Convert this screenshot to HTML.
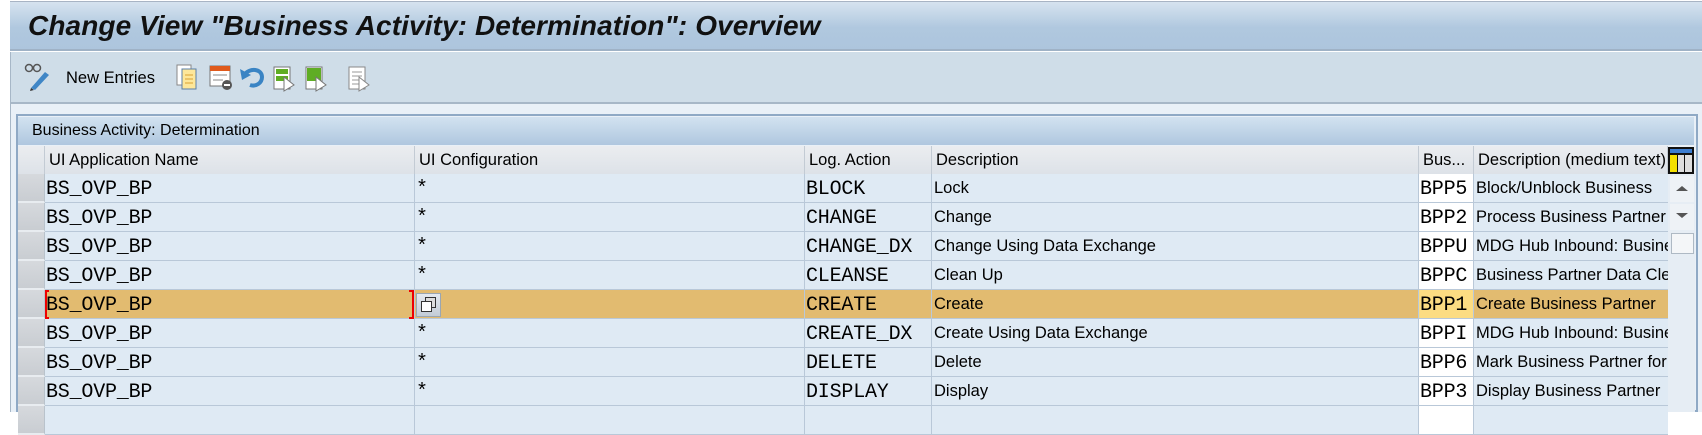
<!DOCTYPE html>
<html><head><meta charset="utf-8"><style>
*{margin:0;padding:0;box-sizing:border-box}
body{width:1702px;height:412px;overflow:hidden;background:#fff;position:relative;font-family:"Liberation Sans",sans-serif}
.abs{position:absolute}
#title{left:10px;top:1px;width:1692px;height:50px;background:linear-gradient(#d6e3ef,#b0c8df 55%,#adc5dd);border-top:1px solid #a8b4c4;border-bottom:2px solid #9fb2c6}
#title span{position:absolute;left:18px;top:8px;font-size:28px;font-weight:bold;font-style:italic;color:#111;letter-spacing:0.1px}
#tb{left:10px;top:52px;width:1692px;height:52px;background:#cfdde8;border-bottom:2px solid #a7b7c7;border-left:1px solid #a7b7c7}
#bg{left:10px;top:104px;width:1692px;height:308px;background:#e9f0f7;border-left:1px solid #a7b7c7}
#panel{left:16px;top:114px;width:1682px;height:298px;border:2px solid #8fa9c5;background:#e9f0f7}
#phead{left:18px;top:117px;width:1676px;height:28px;background:linear-gradient(#d2e2f0,#afc7df);font-size:16px;color:#000}
#phead span{position:absolute;left:14px;top:5px}
.hdr{position:absolute;top:146px;height:28px;background:linear-gradient(#ebedf0,#dde2e8);border-right:1px solid #c3cbd4;font-size:16.5px;padding:5px 0 0 4px;color:#000;white-space:nowrap;overflow:hidden}
.cell{position:absolute;height:29px;border-right:1px solid #b9c8d8;border-bottom:1px solid #b9c8d8;background:#dfeaf4;white-space:nowrap;overflow:hidden;color:#000}
.m{font-family:"Liberation Mono",monospace;font-size:20px;padding:4px 0 0 1px;letter-spacing:-.2px}
.s{font-size:16.5px;padding:5px 0 0 2px}
.sel{position:absolute;left:18px;width:27px;height:29px;background:linear-gradient(#d6d9dd,#c9cdd2);border-bottom:2px solid #e8ecf0;border-right:1px solid #b9c3cc}
</style></head><body>
<div id="title" class="abs"><span>Change View "Business Activity: Determination": Overview</span></div>
<div id="tb" class="abs">
<svg class="abs" style="left:12px;top:10px" width="30" height="30" viewBox="0 0 30 30"><circle cx="6" cy="6" r="3.5" fill="none" stroke="#555" stroke-width="1.5"/><circle cx="14" cy="6" r="3.5" fill="none" stroke="#555" stroke-width="1.5"/><path d="M8 26 L22 10 L26 13 L12 28 Z" fill="#3f86c6"/><path d="M8 26 L7 29 L11 28Z" fill="#333"/></svg>
<div class="abs" style="left:55px;top:17px;font-size:16.5px">New Entries</div>
<svg class="abs" style="left:165px;top:11px" width="160" height="30" viewBox="0 0 160 30">
<rect x="1" y="2" width="14" height="20" fill="#fff" stroke="#888"/><rect x="6" y="6" width="14" height="20" fill="#fde79a" stroke="#5a7fa8"/><path d="M9 12h8M9 16h8M9 20h8" stroke="#d9a233"/>
<rect x="34" y="3" width="20" height="20" fill="#fff" stroke="#777"/><rect x="34" y="3" width="20" height="5" fill="#e05a1c"/><path d="M37 12h14M37 17h10" stroke="#888"/><circle cx="51" cy="22" r="5" fill="#555"/><path d="M48 22h6" stroke="#fff" stroke-width="2"/>
<path d="M68 12 C74 4 86 6 86 14 C86 20 80 24 74 22" fill="none" stroke="#3a84c4" stroke-width="4"/><path d="M64 6 L66 17 L75 12Z" fill="#3a84c4"/>
<rect x="98" y="4" width="16" height="22" fill="#fff" stroke="#777"/><rect x="100" y="6" width="12" height="5" fill="#5fad24"/><rect x="100" y="13" width="12" height="5" fill="#5fad24"/><path d="M108 14 L118 22 L108 28Z" fill="#fff" stroke="#777"/>
<rect x="130" y="4" width="16" height="22" fill="#fff" stroke="#777"/><rect x="131" y="5" width="14" height="13" fill="#5fad24"/><path d="M140 14 L150 22 L140 28Z" fill="#fff" stroke="#777"/>
</svg>
<svg class="abs" style="left:335px;top:11px" width="30" height="30" viewBox="0 0 30 30"><rect x="3" y="4" width="16" height="22" fill="#fff" stroke="#888"/><path d="M6 9h10M6 13h10M6 17h8M6 21h8" stroke="#999"/><path d="M13 14 L23 22 L13 28Z" fill="#fff" stroke="#888"/></svg>
</div>
<div id="bg" class="abs"></div>
<div id="panel" class="abs"></div>
<div id="phead" class="abs"><span>Business Activity: Determination</span></div>
<div class="hdr" style="left:18px;width:27px;padding:0"></div>
<div class="hdr" style="left:45px;width:370px">UI Application Name</div>
<div class="hdr" style="left:415px;width:390px">UI Configuration</div>
<div class="hdr" style="left:805px;width:127px">Log. Action</div>
<div class="hdr" style="left:932px;width:487px">Description</div>
<div class="hdr" style="left:1419px;width:55px">Bus...</div>
<div class="hdr" style="left:1474px;width:194px">Description (medium text)</div>
<svg class="abs" style="left:1668px;top:147px" width="26" height="27" viewBox="0 0 26 27"><rect x="0" y="0" width="26" height="27" fill="#111"/><rect x="2" y="2" width="22" height="4" fill="#3c7dd0"/><rect x="2" y="8" width="7" height="17" fill="#f4e000"/><rect x="10" y="8" width="6" height="17" fill="#ddd"/><rect x="17" y="8" width="7" height="17" fill="#ddd"/></svg>
<div class="abs" style="left:1668px;top:174px;width:27px;height:238px;background:#e6edf4"></div>
<div class="abs" style="left:1670px;top:176px;width:24px;height:26px;background:#eef2f6"><div style="margin:10px auto 0;width:0;height:0;border-left:6px solid transparent;border-right:6px solid transparent;border-bottom:5px solid #555"></div></div>
<div class="abs" style="left:1670px;top:204px;width:24px;height:26px;background:#eef2f6"><div style="margin:9px auto 0;width:0;height:0;border-left:6px solid transparent;border-right:6px solid transparent;border-top:5px solid #555"></div></div>
<div class="abs" style="left:1671px;top:233px;width:23px;height:21px;background:#f4f6f8;border:1px solid #aeb9c4"></div>
<div id="rows"></div>
<script>
const d=[["BLOCK","Lock","BPP5","Block/Unblock Business"],["CHANGE","Change","BPP2","Process Business Partner"],["CHANGE_DX","Change Using Data Exchange","BPPU","MDG Hub Inbound: Business"],["CLEANSE","Clean Up","BPPC","Business Partner Data Cleansing"],["CREATE","Create","BPP1","Create Business Partner"],["CREATE_DX","Create Using Data Exchange","BPPI","MDG Hub Inbound: Business"],["DELETE","Delete","BPP6","Mark Business Partner for"],["DISPLAY","Display","BPP3","Display Business Partner"],["","","",""]];
let h="";
d.forEach((r,i)=>{const y=174+i*29;const hl=i==4;const bg=hl?"background:#e2bb70;":"";
h+=`<div class="sel" style="top:${y}px"></div>`;
h+=`<div class="cell m" style="left:45px;top:${y}px;width:370px;${bg}">${r[0]?"BS_OVP_BP":""}</div>`;
h+=`<div class="cell m" style="left:415px;top:${y}px;width:390px;${bg}">${r[0]&&!hl?"*":""}</div>`;
h+=`<div class="cell m" style="left:805px;top:${y}px;width:127px;${bg}">${r[0]}</div>`;
h+=`<div class="cell s" style="left:932px;top:${y}px;width:487px;${bg}">${r[1]}</div>`;
h+=`<div class="cell m" style="left:1419px;top:${y}px;width:55px;background:${hl?"#fcdc82":"#fff"}">${r[2]}</div>`;
h+=`<div class="cell s" style="left:1474px;top:${y}px;width:194px;${bg}border-right:none">${r[3]}</div>`;});
h+=`<div class="abs" style="left:45px;top:290px;width:4px;height:29px;border:2px solid #e00;border-right:none"></div>`;
h+=`<div class="abs" style="left:409px;top:290px;width:5px;height:29px;border:2px solid #e00;border-left:none"></div>`;
h+=`<div class="abs" style="left:416px;top:293px;width:25px;height:24px;background:linear-gradient(#e4e9ef,#c3ccd6);border:1px solid #9aa6b2"><div style="position:absolute;left:8px;top:3px;width:11px;height:11px;border:1.5px solid #333;background:#ddd"></div><div style="position:absolute;left:4px;top:7px;width:11px;height:11px;border:1.5px solid #333;background:#fff"></div></div>`;
document.getElementById("rows").innerHTML=h;
</script>
</body></html>
